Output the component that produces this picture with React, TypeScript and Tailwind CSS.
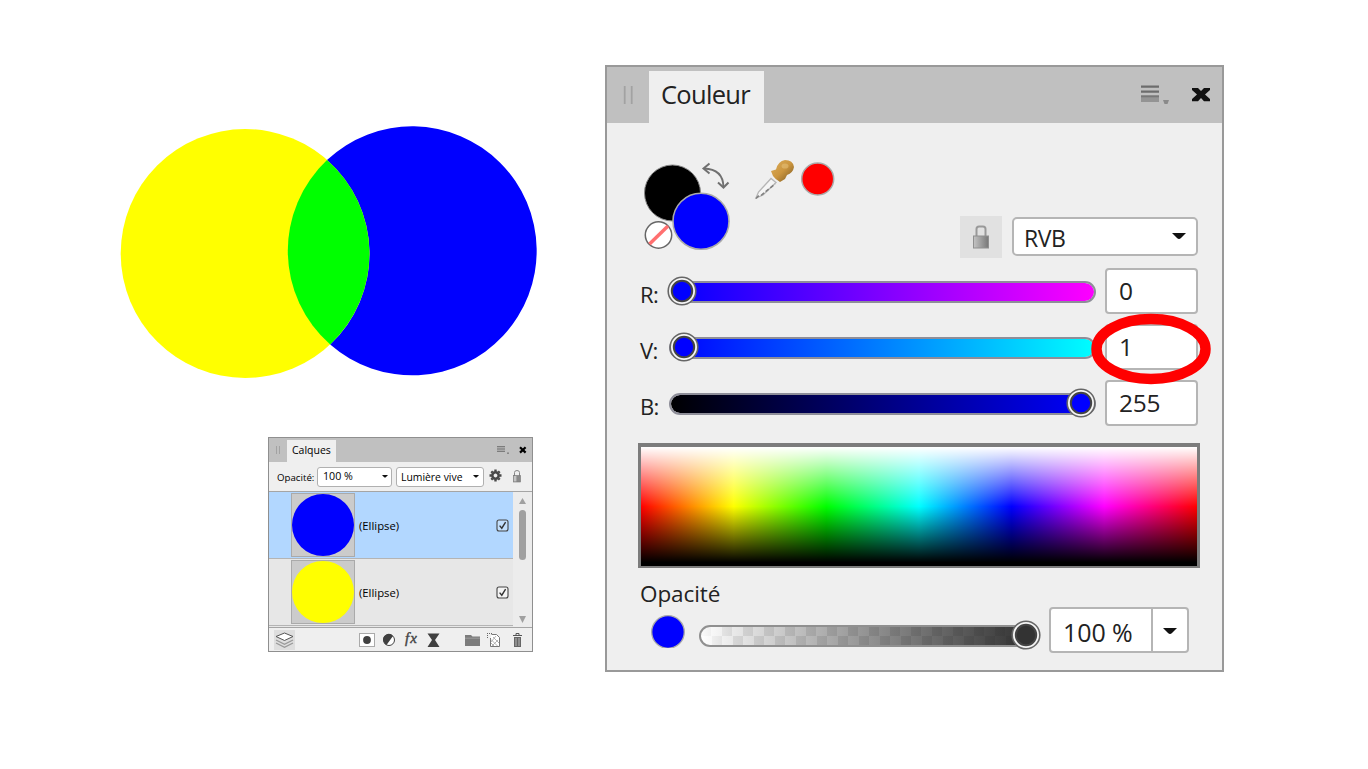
import type { ReactNode } from "react";

function Caret({ className, w }: { className?: string; w: number }) {
  return (
    <svg width={w} height={w / 2} viewBox="0 0 14 7" className={className}>
      <path d="M0 0H14L9 5Q7 7 5 5Z" fill="#111" />
    </svg>
  );
}

function Overlap() {
  return (
    <svg width="418" height="254" viewBox="120 125 418 254" className="ml-[120px] block">
      <circle cx="245.2" cy="253.5" r="124.5" fill="#ff0" />
      <path d="M327 160A124.5 124.5 0 1 1 330.2 344.5A124.5 124.5 0 0 0 327 160Z" fill="#00f" />
      <path d="M327 160.1A124.5 124.5 0 0 1 330.2 344.4A124.5 124.5 0 0 1 327 160.1Z" fill="#0f0" />
    </svg>
  );
}

function Layer({ color, selected }: { color: string; selected?: boolean }) {
  return (
    <div className={`flex h-[67px] items-center border-b border-[#b4b4b4] pl-[22px] ${selected ? "bg-[#b2d7ff]" : "bg-[#e7e7e7]"}`}>
      <svg width="64" height="64" viewBox="0 0 64 64">
        <rect x=".5" y=".5" width="63" height="63" fill="#cbcbcb" stroke="#aaa" />
        <circle cx="32" cy="32" r="31" fill={color} />
      </svg>
      <span className="ml-1 flex-1 pt-px text-[11.3px] leading-4 text-black">(Ellipse)</span>
      <svg width="13" height="13" viewBox="0 0 13 13" className="mr-[4px]">
        <rect x="1" y="1" width="11" height="11" rx="2" fill={selected ? "#c3dffc" : "#f4f4f4"} stroke="#444" strokeWidth="1.1" />
        <path d="M3.6 6.6L5.8 9.2L9.6 3.2" fill="none" stroke="#333" strokeWidth="1.4" />
      </svg>
    </div>
  );
}

function LayersPanel() {
  return (
    <section className="ml-[268px] mt-[58px] flex h-[215px] w-[265px] flex-col border border-[#8f8f8f] bg-[#efefef]">
      <header className="flex h-6 items-end bg-[#c0c0c0]">
        <svg width="18" height="24" viewBox="0 0 18 24">
          <path d="M7.5 8V16M10.5 8V16" stroke="#a2a2a2" />
        </svg>
        <div className="h-[22px] w-[49px] bg-[#efefef] pl-[5px] text-[10.5px] leading-[21px] text-black">Calques</div>
        <svg width="42" height="24" viewBox="0 0 42 24" className="ml-auto">
          <path d="M7 8.8H15M7 11H15M7 13.2H15" stroke="#666" strokeWidth="1.1" />
          <rect x="17" y="14.4" width="2" height="1.6" fill="#888" />
          <path d="M30 9.2L35.6 14.6M35.6 9.2L30 14.6" stroke="#000" strokeWidth="2.2" />
        </svg>
      </header>
      <div className="flex h-[29px] items-center pl-2 text-black">
        <span className="w-10 pt-[2px] text-[9.7px] leading-4">Opacité:</span>
        <div className="flex h-[20px] w-[75px] items-center justify-between rounded-[3px] border border-[#b0b0b0] bg-white pb-px pl-[5px] pr-[3px] text-[10.7px] leading-4">
          100 %<Caret w={6} />
        </div>
        <div className="ml-1 flex h-[20px] w-[88px] items-center justify-between rounded-[3px] border border-[#b0b0b0] bg-white pl-[4px] pr-[4px] text-[10.4px] leading-4">
          <span className="whitespace-nowrap">Lumière vive</span>
          <Caret w={6} />
        </div>
        <svg width="13" height="13" viewBox="-6.5 -6.5 13 13" className="-mt-[2px] ml-[5px]">
          <circle r="3.2" fill="none" stroke="#484848" strokeWidth="2.6" />
          <path d="M0 -6V-4M0 6V4M-6 0H-4M6 0H4M-4.2 -4.2L-3 -3M4.2 4.2L3 3M-4.2 4.2L-3 3M4.2 -4.2L3 -3" stroke="#484848" strokeWidth="2.4" />
        </svg>
        <svg width="10" height="14" viewBox="0 0 10 14" className="-mt-[2px] ml-[10px]">
          <path d="M2.5 7V3.5Q2.5 1.5 5 1.5Q7.5 1.5 7.5 3.5V7" fill="none" stroke="#888" />
          <rect x="1.5" y="6.5" width="7" height="6.5" fill="#8a8a8a" stroke="#777" strokeWidth=".6" />
          <rect x="2" y="7" width="2.4" height="5.4" fill="#c4c4c4" />
        </svg>
      </div>
      <div className="flex h-[137px] overflow-hidden border-y border-[#a5a5a5]">
        <div className="flex-1 overflow-hidden bg-[#e7e7e7]">
          <Layer color="#0000ff" selected />
          <Layer color="#ffff00" />
          <div className="ml-[22px] mt-px h-1 w-16 bg-[#aaa]" />
        </div>
        <div className="flex w-[19px] flex-col items-center bg-[#ececec] pt-[6px]">
          <svg width="7" height="6" viewBox="0 0 7 6"><path d="M3.5 0L7 6H0Z" fill="#a0a0a0" /></svg>
          <div className="mt-[6px] h-[50px] w-[7px] rounded-full bg-[#a0a0a0]" />
          <svg width="7" height="7" viewBox="0 0 7 7" className="mt-[56px]"><path d="M0 0H7L3.5 7Z" fill="#a0a0a0" /></svg>
        </div>
      </div>
      <svg width="263" height="23" viewBox="269 628 263 23" className="block">
        <rect x="274" y="630" width="21" height="20" fill="#dedede" />
        <path d="M276 643L284.5 647.3L293 643M276 640L284.5 644.3L293 640" fill="none" stroke="#999" strokeWidth="1.4" />
        <path d="M276 636.5L284.5 633L293 636.5L284.5 640.5Z" fill="#fff" stroke="#555" />
        <rect x="359.5" y="633.5" width="15" height="13" fill="#fff" stroke="#aaa" />
        <circle cx="367" cy="640" r="3.9" fill="#404040" />
        <circle cx="389" cy="640" r="5.5" fill="#fff" stroke="#444" />
        <path d="M393 636A5.5 5.5 0 0 0 383.6 641.5A5.5 5.5 0 0 0 386.5 645Z" fill="#404040" />
        <text x="405" y="643" fontFamily="Liberation Serif, serif" fontSize="15" fontStyle="italic" fill="#444" stroke="#444" strokeWidth=".4" letterSpacing="1">fx</text>
        <path d="M427.5 633.5H439.5L435 640L439.5 647H427.5L432 640Z" fill="#404040" />
        <path d="M465 636V635H471L472.5 636.5H480V646H465Z" fill="#7c7c7c" />
        <path d="M465 638.2H480" stroke="#aaa" strokeWidth=".7" />
        <path d="M491.5 634.5H496.5L499.5 637.5V646.5H490.5V638" fill="#fff" stroke="#777" />
        <path d="M487 633.5H493M487.5 635V639" stroke="#666" strokeDasharray="1 1" />
        <path d="M491 643L494 646M491 639.5L497.5 646M493 637L499 643M498 640L492 646M496 636L491 642" stroke="#aaa" strokeWidth=".9" />
        <path d="M513 635.5H522M516 635V633.5H519V635" fill="none" stroke="#555" />
        <path d="M514 637H521V647H514Z" fill="#666" />
        <path d="M516 638V646M519 638V646" stroke="#ccc" strokeWidth=".8" />
      </svg>
    </section>
  );
}

function Knob({ fill, className }: { fill: string; className: string }) {
  return (
    <svg width="32" height="32" viewBox="0 0 32 32" className={`absolute ${className}`}>
      <circle cx="16" cy="16" r="13.8" fill="#f6f6f6" stroke="#666" strokeWidth="1.6" />
      <circle cx="16" cy="16" r="10.2" fill={fill} stroke="#444" strokeWidth="2" />
    </svg>
  );
}

function Channel({ name, track, knob, value }: { name: string; track: string; knob: ReactNode; value: string }) {
  return (
    <div className="flex h-[46px] items-center">
      <span className="w-[29px] pt-[6px] text-[22px] leading-7 tracking-[-0.7px] text-[#222]">{name}</span>
      <div className="relative flex w-[427px] pt-[2px]">
        <div className={`h-[22px] w-full rounded-full border-2 border-[#8e8e99] bg-origin-border bg-clip-padding ${track}`} />
        {knob}
      </div>
      <div className="ml-[9px] h-[46px] w-[93px] rounded-[4px] border-2 border-[#b5b5b5] bg-white pl-3 text-[24.5px] leading-[42px] tracking-[-0.3px] text-[#222]">{value}</div>
    </div>
  );
}

function ColorPanel() {
  return (
    <section className="mt-[65px] flex h-[607px] w-[619px] flex-col border-2 border-[#999] bg-[#efefef]">
      <header className="flex h-14 items-end bg-[#c0c0c0]">
        <svg width="42" height="56" viewBox="0 0 42 56">
          <path d="M17.7 19V37M24.7 19V37" stroke="#a2a2a2" strokeWidth="1.8" />
        </svg>
        <div className="h-[52px] w-[115px] bg-[#efefef] pl-[12px] text-[25.5px] leading-[47px] tracking-[-0.7px] text-[#222]">Couleur</div>
        <svg width="90" height="56" viewBox="1132 67 90 56" className="ml-auto">
          <path d="M1141 86.7H1159M1141 91.7H1159" stroke="#6c6c6c" strokeWidth="2.2" />
          <rect x="1141" y="95" width="18" height="7" fill="#949494" />
          <path d="M1141 96.5H1159" stroke="#777" strokeWidth="1.6" />
          <path d="M1163 100H1169L1167.5 104H1164.5Z" fill="#8a8a8a" />
          <path d="M1192 88H1198L1201 91L1204 88H1210V90L1205 94.5L1210 99V101.2H1204L1201 98L1198 101.2H1192V99L1197 94.5L1192 90Z" fill="#111" />
        </svg>
      </header>
      <div className="flex flex-1 flex-col pl-[33px] pr-6 pt-[35px]">
        <div className="flex h-[98px] items-end">
          <svg width="200" height="98" viewBox="640 158 200 98">
            <defs>
              <linearGradient id="bulb" x1="0" y1="0" x2="1" y2="1">
                <stop offset="0" stopColor="#dcae5c" />
                <stop offset=".5" stopColor="#cc963f" />
                <stop offset="1" stopColor="#765520" />
              </linearGradient>
            </defs>
            <circle cx="672.5" cy="193" r="28" fill="#000" stroke="#888" />
            <circle cx="701" cy="221.3" r="28" fill="#00f" stroke="#aaa" strokeWidth="1.6" />
            <circle cx="658.5" cy="235" r="13.2" fill="#fff" stroke="#666" strokeWidth="1.5" />
            <path d="M649.5 244L668 226" stroke="#ff7070" strokeWidth="3.5" />
            <path d="M704 168.5Q723 169 723.5 187" fill="none" stroke="#707070" strokeWidth="1.9" />
            <path d="M709.5 163.5L703.5 168.5L709.5 173.5M718 182.5L723.5 187.5L728.5 182.5" fill="none" stroke="#707070" strokeWidth="2" />
            <path d="M756 198L758.5 192L771 178.5L776 182.5L763 195Z" fill="#f5f5f5" stroke="#b5b5b5" strokeWidth="1.3" />
            <path d="M756 198.5L759.5 195M761 195.5L775 184" stroke="#808080" strokeWidth="1.6" strokeDasharray="4 2" />
            <path d="M771 171L776 169.5Q778 161 785 160Q793 160 794 167Q793 173 787 175L785 179L780 182Q775 179 773 176Z" fill="url(#bulb)" />
            <ellipse cx="785" cy="166" rx="3.5" ry="2.6" fill="#eac680" opacity=".5" />
            <circle cx="817.7" cy="179" r="16" fill="#f00" stroke="#aaa" strokeWidth="1.5" />
          </svg>
          <div className="ml-[120px] flex h-[42px] w-[42px] translate-y-[2px] items-center justify-center bg-[#e1e1e1]">
            <svg width="20" height="26" viewBox="0 0 20 26">
              <defs>
                <linearGradient id="metal"><stop stopColor="#c4c4c4" /><stop offset="1" stopColor="#777" /></linearGradient>
              </defs>
              <path d="M5.5 12V5Q5.5 2.5 8 2.5H12Q14.5 2.5 14.5 5V12" fill="none" stroke="#999" strokeWidth="2" />
              <rect x="2.5" y="12" width="15" height="12" fill="url(#metal)" stroke="#909090" />
            </svg>
          </div>
          <div className="ml-[10px] flex h-[39px] w-[186px] items-center justify-between rounded-[5px] border-2 border-[#b5b5b5] bg-white pl-[10px] pr-[10px] pt-[2px] text-[23px] leading-8 tracking-[-0.5px] text-[#222]">
            RVB
            <Caret w={14} className="-mt-[3px]" />
          </div>
        </div>
        <div className="mt-3 flex flex-col gap-[10px]">
          <Channel name="R:" track="bg-linear-to-r/srgb from-[#0000ff] to-[#ff00ff]" value="0" knob={<Knob fill="#00f" className="-left-[3px] -top-[4px]" />} />
          <Channel name="V:" track="bg-linear-to-r/srgb from-[#0000ff] to-[#00ffff]" value="1" knob={<Knob fill="#00f" className="-left-px -top-[4px]" />} />
          <Channel name="B:" track="bg-linear-to-r/srgb from-[#000000] to-[#0000ff]" value="255" knob={<Knob fill="#00f" className="left-[396px] -top-[4px]" />} />
        </div>
        <div className="-ml-[2px] mt-[17px] h-[125px] w-[562px] border-x-[3px] border-b-2 border-t-4 border-[#7c7c7c] bg-[linear-gradient(to_bottom,#fff_0%,rgba(255,255,255,0)_50%,rgba(0,0,0,0)_50%,#000_97%),linear-gradient(to_right,#f00,#ff0,#0f0,#0ff,#00f,#f0f,#f00)]" />
        <div className="mt-[11px] h-7 text-[22.5px] leading-[29px] tracking-[-0.1px] text-[#222]">Opacité</div>
        <div className="flex h-[46px] items-center pl-[11px]">
          <svg width="36" height="36" viewBox="0 0 36 36">
            <circle cx="17" cy="20" r="16.3" fill="#00f" stroke="#aaa" strokeWidth="1.3" />
          </svg>
          <div className="relative ml-[12px] flex w-[337px] pt-[11px]">
            <div className="h-[22px] w-full rounded-full border-2 border-[#909090] bg-[linear-gradient(to_right,rgba(255,255,255,.95)_0%,rgba(225,225,225,.75)_10%,rgba(135,135,135,.82)_45%,rgba(44,44,44,.97)_98%),repeating-conic-gradient(#fff_0_25%,#b5b5b5_0_50%)] bg-[size:100%_100%,21px_18px] bg-origin-padding" />
            <Knob fill="#333" className="left-[311px] top-[5px]" />
          </div>
          <div className="ml-[13px] flex h-[46px] w-[140px] rounded-[4px] border-2 border-[#b5b5b5] bg-white">
            <div className="flex-1 whitespace-nowrap pl-3 text-[25px] leading-[46px] tracking-[-0.1px] text-[#222]">100 %</div>
            <div className="flex w-[36px] items-center justify-center border-l-2 border-[#b5b5b5] pt-[2px]">
              <Caret w={14} />
            </div>
          </div>
        </div>
      </div>
    </section>
  );
}

export default function App() {
  return (
    <main className="relative flex h-[769px] w-[1368px] overflow-hidden bg-white font-['Open_Sans','Noto_Sans',sans-serif]">
      <div className="w-[605px] shrink-0 pt-[125px]">
        <Overlap />
        <LayersPanel />
      </div>
      <ColorPanel />
      <svg width="120" height="72" viewBox="0 0 120 72" className="absolute left-[1091px] top-[313px]">
        <ellipse cx="60" cy="36" rx="54.5" ry="30" fill="none" stroke="#f00" strokeWidth="10.5" />
      </svg>
    </main>
  );
}
